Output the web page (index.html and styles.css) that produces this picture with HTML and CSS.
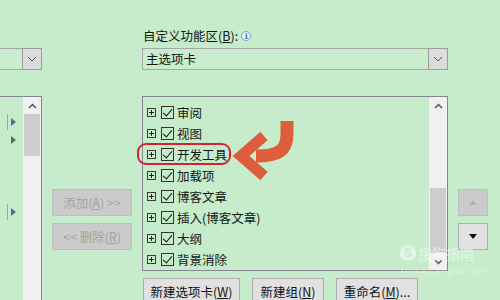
FILE: index.html
```html
<!DOCTYPE html>
<html lang="zh-CN">
<head>
  <meta charset="UTF-8" />
  <title>自定义功能区</title>
  <link rel="stylesheet" href="styles.css">
</head>
<body>
  <div class="dialog">
    <div class="col col-left">
      <div class="combo combo-cut">
        <span class="combo-btn">
          <svg width="10" height="6" viewBox="0 0 10 6"><path d="M1 1 L5 5 L9 1" fill="none" stroke="#555" stroke-width="1"/></svg>
        </span>
      </div>
      <div class="list list-cut">
        <div class="markers">
          <span class="marker m1 bar"></span>
          <span class="marker m2"></span>
          <span class="marker m3 bar"></span>
        </div>
        <div class="scroll">
          <span class="sb-arrow">
            <svg width="9" height="6" viewBox="0 0 9 6"><path d="M1 5 L4.5 1.5 L8 5" fill="none" stroke="#555" stroke-width="1.5"/></svg>
          </span>
          <span class="thumb thumb-left"></span>
        </div>
      </div>
    </div>

    <div class="col col-mid">
      <button class="btn btn-off">添加(<u>A</u>) &gt;&gt;</button>
      <button class="btn btn-off">&lt;&lt; 删除(<u>R</u>)</button>
    </div>

    <div class="col col-right">
      <div class="label">自定义功能区(<u>B</u>):<span class="info">i</span></div>
      <div class="combo">
        <span class="combo-text">主选项卡</span>
        <span class="combo-btn">
          <svg width="10" height="6" viewBox="0 0 10 6"><path d="M1 1 L5 5 L9 1" fill="none" stroke="#555" stroke-width="1"/></svg>
        </span>
      </div>
      <div class="list list-main">
        <ul class="items">
          <li><span class="plus"></span><span class="check"></span>审阅</li>
          <li><span class="plus"></span><span class="check"></span>视图</li>
          <li><span class="plus"></span><span class="check"></span>开发工具</li>
          <li><span class="plus"></span><span class="check"></span>加载项</li>
          <li><span class="plus"></span><span class="check"></span>博客文章</li>
          <li><span class="plus"></span><span class="check"></span>插入(博客文章)</li>
          <li><span class="plus"></span><span class="check"></span>大纲</li>
          <li><span class="plus"></span><span class="check"></span>背景消除</li>
        </ul>
        <div class="scroll">
          <span class="sb-arrow">
            <svg width="9" height="6" viewBox="0 0 9 6"><path d="M1 5 L4.5 1.5 L8 5" fill="none" stroke="#555" stroke-width="1.5"/></svg>
          </span>
          <span class="thumb thumb-main"></span>
          <span class="sb-arrow">
            <svg width="9" height="6" viewBox="0 0 9 6"><path d="M1 1 L4.5 4.5 L8 1" fill="none" stroke="#555" stroke-width="1.5"/></svg>
          </span>
        </div>
      </div>
      <div class="bottom-btns">
        <button class="btn btn-new-tab">新建选项卡(<u>W</u>)</button>
        <button class="btn btn-new-group">新建组(<u>N</u>)</button>
        <button class="btn btn-rename">重命名(<u>M</u>)...</button>
      </div>
    </div>

    <div class="col col-far">
      <button class="btn btn-off btn-sq">
        <svg width="8" height="5" viewBox="0 0 8 5"><path d="M0 5 L4 0 L8 5 Z" fill="#b0b0b0"/></svg>
      </button>
      <button class="btn btn-sq">
        <svg width="8" height="5" viewBox="0 0 8 5"><path d="M0 0 L4 5 L8 0 Z" fill="#111"/></svg>
      </button>
    </div>

    <!-- 标注 -->
    <div class="ring"></div>
    <svg class="arrow" width="70" height="64" viewBox="0 0 70 64">
      <path d="M57 3 L57 16 C57 33 48 38 26 38" fill="none" stroke="#dd5e3d" stroke-width="13"/>
      <path d="M34 18 L11 38 L34 58" fill="none" stroke="#dd5e3d" stroke-width="11" stroke-linejoin="miter"/>
    </svg>

    <div class="watermark">
      <div class="wm-top"><span class="wm-logo">S</span>搜狗指南</div>
      <div class="wm-url">zhinan.sogou.com</div>
    </div>
  </div>
</body>
</html>
```

FILE: styles.css
```css
* {
  margin: 0;
  padding: 0;
  box-sizing: border-box;
}
body {
  width: 500px;
  height: 300px;
  overflow: hidden;
  background-color: #c7eccb;
  font-family: "Noto Sans CJK SC", "Liberation Sans", sans-serif;
  font-size: 12.5px;
  color: #151515;
}
.dialog {
  position: relative;
  display: flex;
  height: 300px;
}
.col {
  display: flex;
  flex-direction: column;
}

/* combos */
.combo {
  display: flex;
  height: 22px;
  border: 1px solid #a3a8a4;
  background-color: #c9edcd;
}
.combo-cut {
  border-left: none;
}
.combo-text {
  flex: 1;
  line-height: 20px;
  padding-left: 3px;
}
.combo-btn {
  width: 20px;
  margin: -1px -1px -1px auto;
  display: flex;
  align-items: center;
  justify-content: center;
  background-color: #dcdcdc;
  border: 1px solid #9c9c9c;
}

/* list boxes */
.list {
  display: flex;
  border: 1px solid #828790;
  background-color: #c7eccb;
}
.list-cut {
  border-left: none;
  border-bottom: none;
  margin-top: 26px;
  flex: 1;
}
.scroll {
  width: 18px;
  display: flex;
  flex-direction: column;
  align-items: center;
  background-color: #f0f0f0;
}
.sb-arrow {
  height: 17px;
  display: flex;
  align-items: center;
  justify-content: center;
}
.thumb {
  width: 16px;
  background-color: #cdcdcd;
}
.thumb-left {
  height: 42px;
}
.thumb-main {
  margin-top: auto;
  height: 65px;
}

/* left column */
.col-left {
  width: 42px;
  padding-top: 48px;
}
.markers {
  flex: 1;
  display: flex;
  flex-direction: column;
  padding-top: 21px;
}
.marker {
  position: relative;
  margin-left: 11px;
  width: 0;
  height: 0;
  border-left: 5px solid #41739b;
  border-top: 4px solid transparent;
  border-bottom: 4px solid transparent;
}
.m2 {
  margin-top: 10px;
  border-left-color: #5c6b6a;
}
.m3 {
  margin-top: 64px;
}
.bar::before {
  content: "";
  position: absolute;
  left: -9px;
  top: -8px;
  width: 1px;
  height: 16px;
  background-color: #8fa9b4;
}

/* middle column */
.col-mid {
  width: 100px;
  padding: 189px 10px 0;
  gap: 7px;
}
.btn {
  font-family: inherit;
  font-size: 12.5px;
  color: #111;
  background-color: #e1e1e1;
  border: 1px solid #adadad;
  display: flex;
  align-items: center;
  justify-content: center;
}
.col-mid .btn {
  height: 27px;
}
.btn-off {
  background-color: #cbcbcb;
  border-color: #bdbdbd;
  color: #a3a3a3;
}

/* right column */
.col-right {
  width: 306px;
  padding-top: 28px;
}
.label {
  height: 16px;
  line-height: 16px;
  padding-left: 1px;
  display: flex;
  align-items: center;
}
.info {
  width: 10px;
  height: 10px;
  margin-left: 3px;
  border: 1px solid #7f9fc3;
  border-radius: 50%;
  background-color: #eef4fa;
  color: #3d6fb0;
  font-family: "DejaVu Serif", serif;
  font-size: 8px;
  line-height: 8px;
  text-align: center;
  font-weight: bold;
}
.col-right .combo {
  margin-top: 4px;
}
.list-main {
  margin-top: 26px;
  height: 176px;
}
.items {
  flex: 1;
  list-style: none;
  padding: 5px 0 0 4px;
}
.items li {
  height: 21px;
  display: flex;
  align-items: center;
  white-space: nowrap;
}
.plus {
  position: relative;
  width: 9px;
  height: 9px;
  border: 1px solid #3a3a3a;
}
.plus::before,
.plus::after {
  content: "";
  position: absolute;
  background-color: #222;
}
.plus::before {
  left: 1px;
  top: 3px;
  width: 5px;
  height: 1px;
}
.plus::after {
  left: 3px;
  top: 1px;
  width: 1px;
  height: 5px;
}
.check {
  position: relative;
  width: 13px;
  height: 13px;
  margin: 0 3px 0 5px;
  border: 1px solid #333;
}
.check::after {
  content: "";
  position: absolute;
  left: 3px;
  top: 0px;
  width: 4px;
  height: 8px;
  border-right: 1.5px solid #111;
  border-bottom: 1.5px solid #111;
  transform: rotate(40deg);
}
.bottom-btns {
  display: flex;
  gap: 12px;
  margin-top: 7px;
  padding-left: 1px;
}
.bottom-btns .btn {
  height: 26px;
}
.btn-new-tab {
  width: 97px;
}
.btn-new-group {
  width: 72px;
}
.btn-rename {
  width: 82px;
}

/* far right */
.col-far {
  width: 52px;
  padding: 189px 0 0 10px;
  gap: 7px;
}
.btn-sq {
  width: 30px;
  height: 27px;
}

/* annotations */
.ring {
  position: absolute;
  left: 137px;
  top: 143px;
  width: 94px;
  height: 22px;
  border: 2px solid #d2232e;
  border-radius: 9px;
}
.arrow {
  position: absolute;
  left: 230px;
  top: 118px;
}
.watermark {
  position: absolute;
  left: 400px;
  top: 244px;
  color: rgba(255, 255, 255, 0.55);
}
.wm-top {
  display: flex;
  align-items: center;
  gap: 2px;
  font-size: 14px;
  line-height: 18px;
}
.wm-logo {
  width: 16px;
  height: 16px;
  border-radius: 50%;
  background-color: rgba(255, 255, 255, 0.5);
  color: #c7eccb;
  font-family: "Liberation Sans", sans-serif;
  font-weight: bold;
  font-size: 12px;
  line-height: 16px;
  text-align: center;
}
.wm-url {
  font-family: "Liberation Sans", sans-serif;
  font-size: 8px;
  letter-spacing: 1.5px;
  margin-top: 4px;
}
```
